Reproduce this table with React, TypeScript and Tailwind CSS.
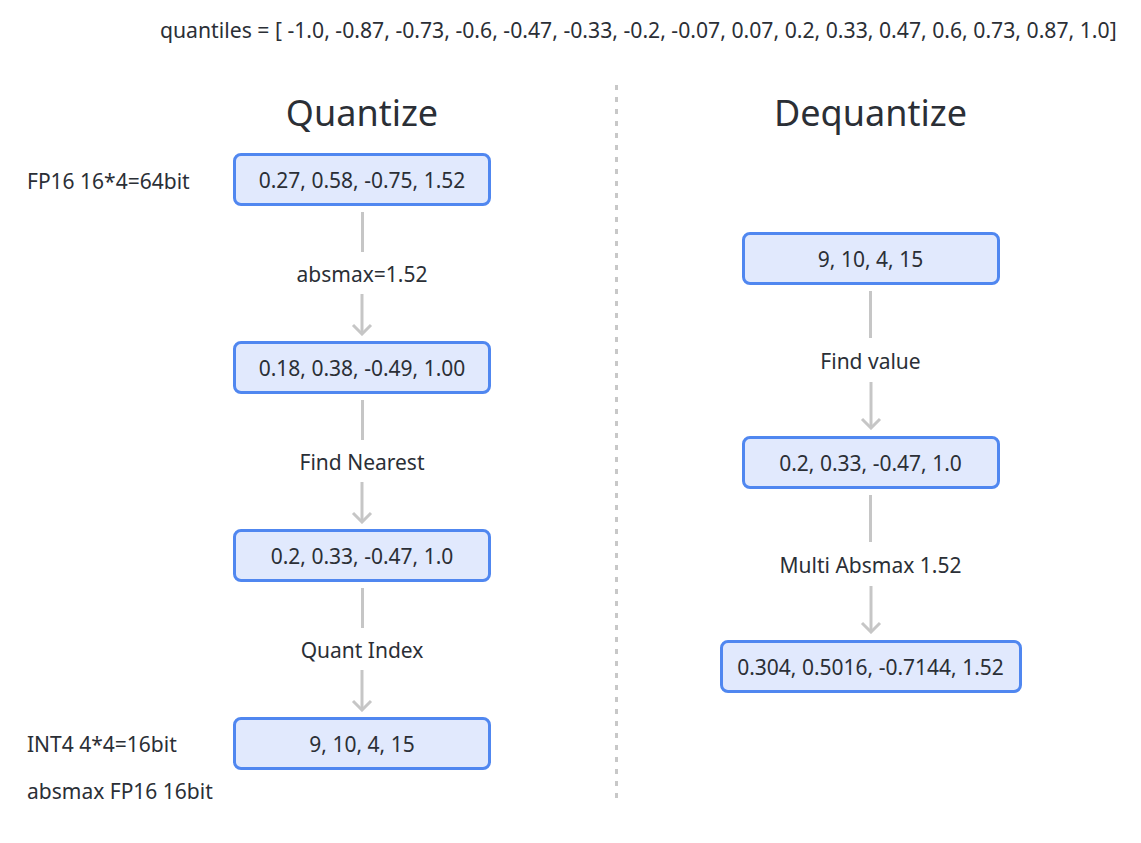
import React from 'react';

const quantiles = [-1.0, -0.87, -0.73, -0.6, -0.47, -0.33, -0.2, -0.07, 0.07, 0.2, 0.33, 0.47, 0.6, 0.73, 0.87, 1.0];

function fmt(n: number) {
    return Number.isInteger(n) ? n.toFixed(1) : String(n);
}

function cx(...c: string[]) {
    return c.join(' ');
}

function Box({ children, wide }: { children: React.ReactNode; wide?: boolean }) {
    return (
        <div
            className={cx(
                wide ? 'w-[302px]' : 'w-[258px]',
                'h-[53px] shrink-0 border-[3px] border-[#5087f0] rounded-[8px] bg-[#e1e9fd] flex items-center justify-center pt-[2px] text-[21px] text-[#2b2f36]'
            )}
        >
            {children}
        </div>
    );
}

function Arrow({ h }: { h: number }) {
    return (
        <svg width="24" height={h} viewBox={`0 0 24 ${h}`} className="block">
            <line x1="12" y1="0" x2="12" y2={h - 2} stroke="#c6c6c6" strokeWidth="3" />
            <polyline points={`3,${h - 11} 12,${h - 2} 21,${h - 11}`} fill="none" stroke="#c6c6c6" strokeWidth="3" />
        </svg>
    );
}

// vertical connector: plain line, label, arrow
function Step({ label, tall }: { label: string; tall?: boolean }) {
    return (
        <div className={cx('flex flex-col items-center w-[258px] pt-[6px]', tall ? 'pb-[6px]' : 'pb-[5px]')}>
            <div className={cx('w-[3px] bg-[#c6c6c6]', tall ? 'h-[47px]' : 'h-[40px]')} />
            <div className={cx('flex items-center justify-center pt-[4px] text-[21px] text-[#2b2f36] whitespace-nowrap', tall ? 'h-[44px]' : 'h-[42px]')}>
                {label}
            </div>
            <Arrow h={tall ? 48 : 42} />
        </div>
    );
}

export default function App() {
    return (
        <div className="w-[1141px] h-[843px] bg-white flex flex-col font-['Noto_Sans',sans-serif] text-[#2b2f36]">
            {/* quantile table */}
            <div className="h-[85px] pl-[160px] pt-[14px] text-[21.2px] leading-[32px] whitespace-nowrap">
                quantiles = [ {quantiles.map(fmt).join(', ')}]
            </div>

            <div className="flex flex-1">
                {/* Quantize */}
                <section className="w-[614px] flex flex-col">
                    <div className="ml-[233px] w-[258px] mt-[5px] h-[46px] text-center text-[36px] leading-[46px]">Quantize</div>
                    <div className="flex items-center mt-[17px]">
                        <div className="w-[233px] pl-[27px] pt-[4px] text-[21px] whitespace-nowrap">FP16 16*4=64bit</div>
                        <Box>0.27, 0.58, -0.75, 1.52</Box>
                    </div>
                    <div className="ml-[233px]"><Step label="absmax=1.52" /></div>
                    <div className="ml-[233px]"><Box>0.18, 0.38, -0.49, 1.00</Box></div>
                    <div className="ml-[233px]"><Step label="Find Nearest" /></div>
                    <div className="ml-[233px]"><Box>0.2, 0.33, -0.47, 1.0</Box></div>
                    <div className="ml-[233px]"><Step label="Quant Index" /></div>
                    <div className="flex items-center">
                        <div className="w-[233px] pl-[27px] pt-[2px] text-[21px] whitespace-nowrap">INT4 4*4=16bit</div>
                        <Box>9, 10, 4, 15</Box>
                    </div>
                    <div className="pl-[27px] mt-[7px] text-[21px] leading-[28px] whitespace-nowrap">absmax FP16 16bit</div>
                </section>

                {/* divider */}
                <div className="w-[3px] h-[718px] ml-[1px] bg-[repeating-linear-gradient(to_bottom,#c8c8c8_0px,#c8c8c8_5px,transparent_5px,transparent_12px)]" />

                {/* Dequantize */}
                <section className="w-[505px] flex flex-col items-center">
                    <div className="mt-[5px] h-[46px] text-center text-[36px] leading-[46px]">Dequantize</div>
                    <div className="mt-[96px]"><Box>9, 10, 4, 15</Box></div>
                    <Step label="Find value" tall />
                    <Box>0.2, 0.33, -0.47, 1.0</Box>
                    <Step label="Multi Absmax 1.52" tall />
                    <Box wide>0.304, 0.5016, -0.7144, 1.52</Box>
                </section>
            </div>
        </div>
    );
}
